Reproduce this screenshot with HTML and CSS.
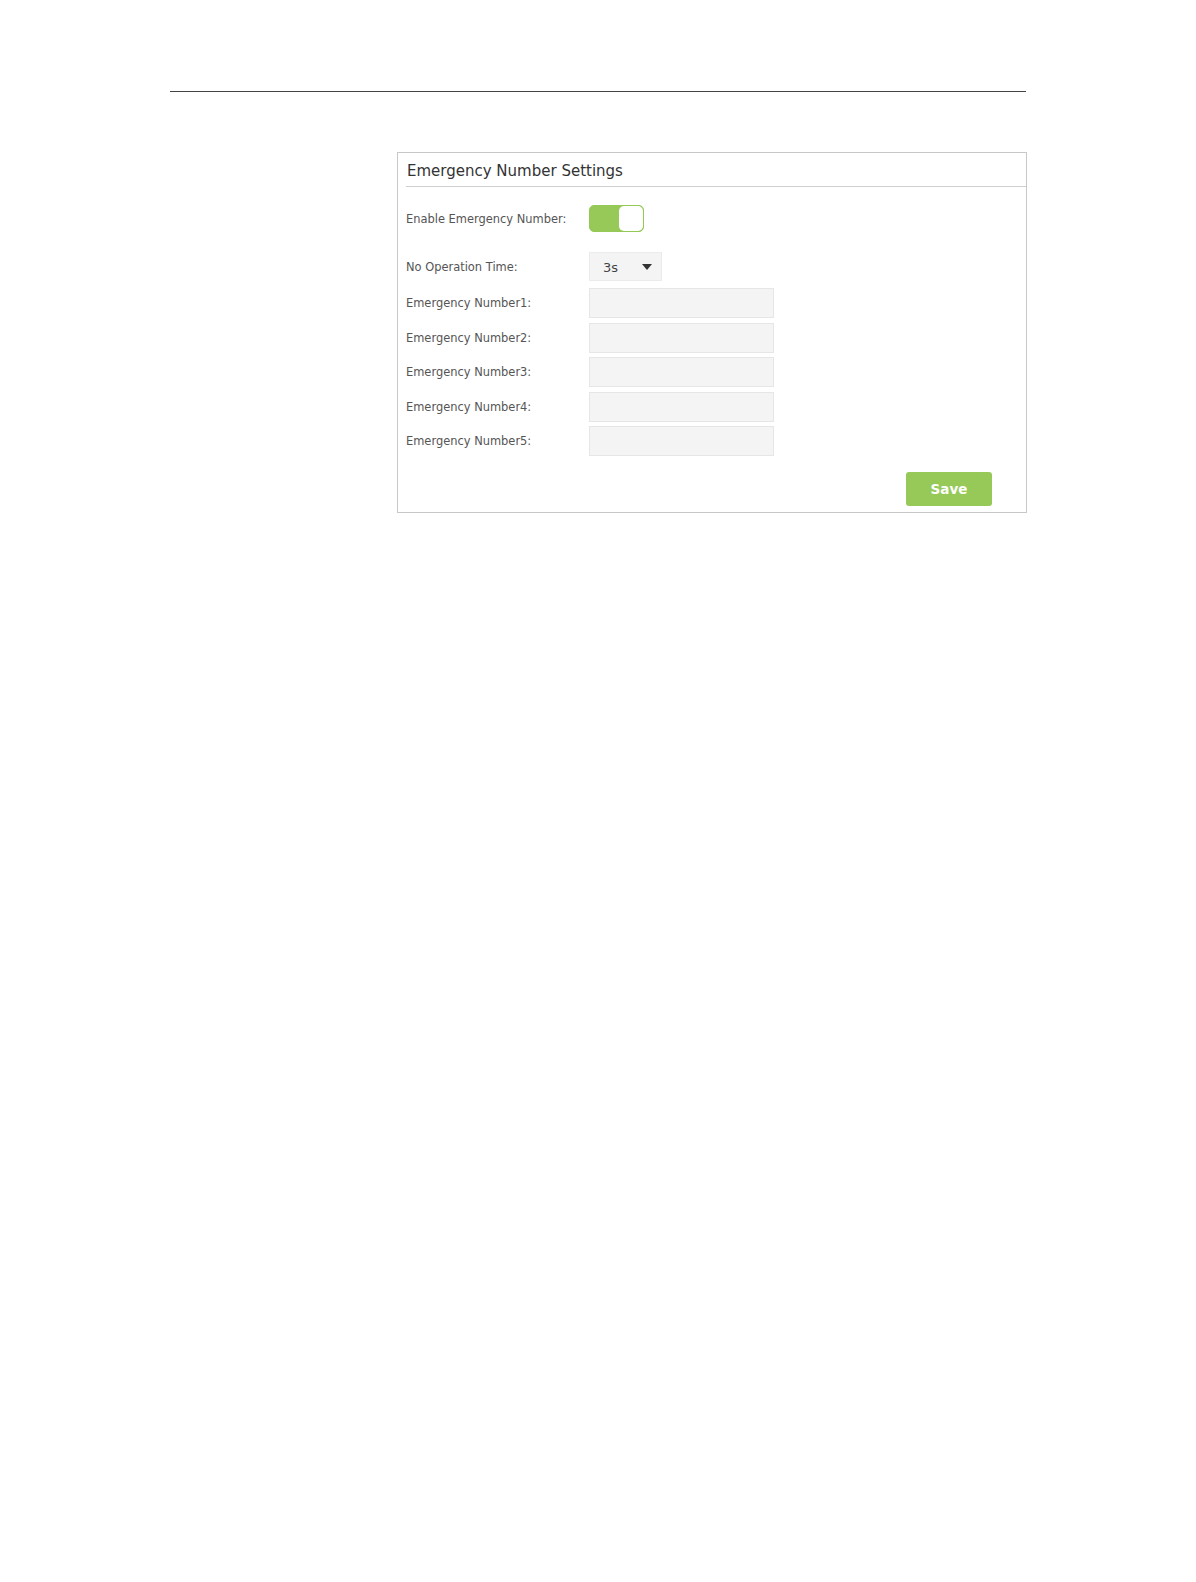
FILE: index.html
```html
<!DOCTYPE html>
<html>
	<head>
		<meta charset="utf-8">
		<title>Emergency Number Settings</title>
		<link rel="stylesheet" href="styles.css">
	</head>
	<body>
		<!-- 页眉线 -->
		<div class="page-rule"></div>
		<!-- 设置面板 -->
		<div class="panel">
			<div class="panel-title">Emergency Number Settings</div>
			<div class="panel-body">
				<div class="row row-toggle">
					<label class="label">Enable Emergency Number:</label>
					<div class="toggle on">
						<span class="knob"></span>
					</div>
				</div>
				<div class="row row-select">
					<label class="label">No Operation Time:</label>
					<div class="select">
						<span class="select-value">3s</span>
						<span class="select-arrow"></span>
					</div>
				</div>
				<div class="row row-input">
					<label class="label">Emergency Number1:</label>
					<input class="text" type="text">
				</div>
				<div class="row row-input">
					<label class="label">Emergency Number2:</label>
					<input class="text" type="text">
				</div>
				<div class="row row-input">
					<label class="label">Emergency Number3:</label>
					<input class="text" type="text">
				</div>
				<div class="row row-input">
					<label class="label">Emergency Number4:</label>
					<input class="text" type="text">
				</div>
				<div class="row row-input">
					<label class="label">Emergency Number5:</label>
					<input class="text" type="text">
				</div>
				<div class="actions">
					<button class="btn-save">Save</button>
				</div>
			</div>
		</div>
	</body>
</html>
```

FILE: styles.css
```css
/* 页面基础 */
body {
	margin: 0;
	background: #fff;
	font-family: "DejaVu Sans", Verdana, sans-serif;
	color: #555;
}

.page-rule {
	width: 856px;
	height: 0;
	border-top: 1px solid #444;
	margin: 91px 0 0 170px;
}

/* 设置面板 */
.panel {
	width: 628px;
	margin: 60px 0 0 397px;
	border: 1px solid #c8c8c8;
	padding-bottom: 6px;
}

.panel-title {
	height: 33px;
	line-height: 37px;
	margin-left: 8px;
	padding-left: 1px;
	font-size: 15px;
	color: #333;
	border-bottom: 1px solid #cfcfcf;
}

.panel-body {
	padding: 18px 0 0 8px;
}

.row {
	display: flex;
	align-items: center;
}

.label {
	width: 183px;
	font-size: 11.45px;
	color: #555;
}

.row-select {
	margin-top: 20px;
}

.row-input {
	margin-top: 4.5px;
}

.row-select + .row-input {
	margin-top: 7px;
}

/* 开关 */
.toggle {
	width: 53px;
	height: 25px;
	border: 1px solid #95c956;
	border-radius: 5px;
	background: #96c957;
	display: flex;
	justify-content: flex-end;
}

.toggle .knob {
	width: 24px;
	height: 25px;
	background: #fff;
	border-radius: 5px;
}

/* 下拉框 */
.select {
	width: 49px;
	height: 27px;
	background: #f4f4f4;
	border: 1px solid #ebebeb;
	display: flex;
	align-items: center;
	justify-content: space-between;
	padding: 0 9px 0 13px;
}

.select-value {
	font-size: 13px;
	color: #444;
	padding-top: 2px;
}

.select-arrow {
	width: 0;
	height: 0;
	border-left: 5px solid transparent;
	border-right: 5px solid transparent;
	border-top: 6px solid #333;
}

/* 输入框 */
.text {
	width: 185px;
	height: 30px;
	margin: 0;
	padding: 0;
	box-sizing: border-box;
	background: #f4f4f4;
	border: 1px solid #e6e6e6;
	outline: none;
}

/* 保存按钮 */
.actions {
	display: flex;
	justify-content: flex-end;
	padding-right: 34px;
	margin-top: 16px;
}

.btn-save {
	width: 86px;
	height: 34px;
	border: none;
	border-radius: 3px;
	background: #96c957;
	color: #fff;
	font-family: "DejaVu Sans", Verdana, sans-serif;
	font-size: 13.5px;
	font-weight: 600;
}
```
